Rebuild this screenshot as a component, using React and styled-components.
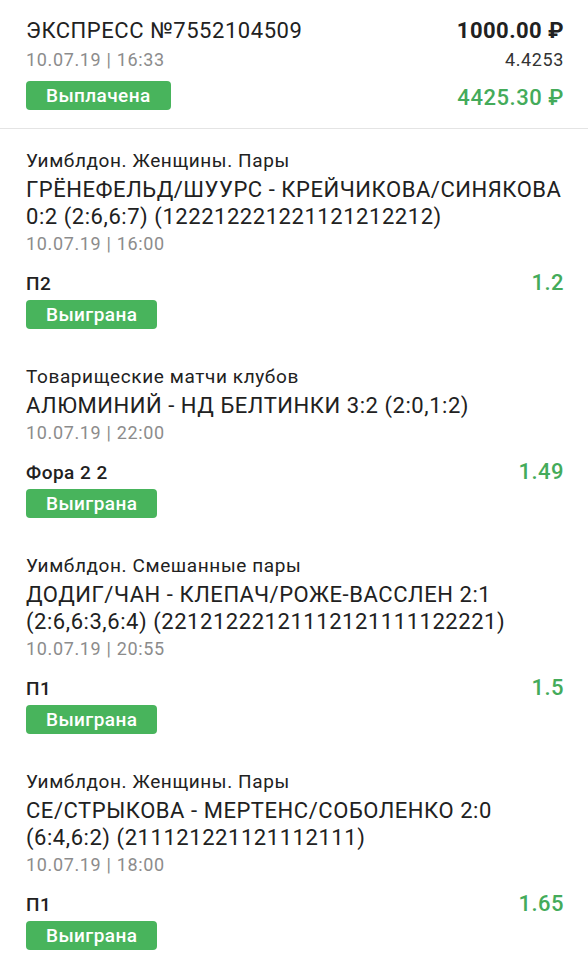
import React from "react";
import styled, { createGlobalStyle } from "styled-components";

const GlobalStyle = createGlobalStyle`
  html, body {
    margin: 0;
    padding: 0;
    background: #fff;
  }
  body {
    font-family: Roboto, "Noto Sans", Arial, sans-serif;
    color: #212121;
    -webkit-font-smoothing: antialiased;
  }
`;

const bets = [
  {
    league: "Уимблдон. Женщины. Пары",
    match: "ГРЁНЕФЕЛЬД/ШУУРС - КРЕЙЧИКОВА/СИНЯКОВА 0:2 (2:6,6:7) (122212221221121212212)",
    date: "10.07.19 | 16:00",
    pick: "П2",
    coef: "1.2",
  },
  {
    league: "Товарищеские матчи клубов",
    match: "АЛЮМИНИЙ - НД БЕЛТИНКИ 3:2 (2:0,1:2)",
    date: "10.07.19 | 22:00",
    pick: "Фора 2 2",
    coef: "1.49",
  },
  {
    league: "Уимблдон. Смешанные пары",
    match: "ДОДИГ/ЧАН - КЛЕПАЧ/РОЖЕ-ВАССЛЕН 2:1 (2:6,6:3,6:4) (22121222121112121111122221)",
    date: "10.07.19 | 20:55",
    pick: "П1",
    coef: "1.5",
  },
  {
    league: "Уимблдон. Женщины. Пары",
    match: "СЕ/СТРЫКОВА - МЕРТЕНС/СОБОЛЕНКО 2:0 (6:4,6:2) (211121221121112111)",
    date: "10.07.19 | 18:00",
    pick: "П1",
    coef: "1.65",
  },
];

const App = () => {
  return (
    <Page>
      <GlobalStyle />
      <Header>
        <Column>
          <Title>ЭКСПРЕСС №7552104509</Title>
          <DateText>10.07.19 | 16:33</DateText>
          <Badge>Выплачена</Badge>
        </Column>
        <Column align="flex-end">
          <Stake>1000.00 ₽</Stake>
          <TotalCoef>4.4253</TotalCoef>
          <Payout>4425.30 ₽</Payout>
        </Column>
      </Header>
      <List>
        {bets.map((bet, index) => (
          <Bet key={index}>
            <League>{bet.league}</League>
            <Match>{bet.match}</Match>
            <DateText>{bet.date}</DateText>
            <PickRow>
              <Pick>{bet.pick}</Pick>
              <Coef>{bet.coef}</Coef>
            </PickRow>
            <Badge>Выиграна</Badge>
          </Bet>
        ))}
      </List>
    </Page>
  );
};

const Page = styled.div`
  width: 588px;
  min-height: 964px;
  background: #fff;
  overflow: hidden;
`;

const Header = styled.div`
  display: flex;
  justify-content: space-between;
  padding: 17px 24px 16px 26px;
  border-bottom: 1px solid #e4e4e4;
`;

const Column = styled.div`
  display: flex;
  flex-direction: column;
  align-items: ${({ align }) => align || "flex-start"};
`;

const Title = styled.div`
  font-size: 22px;
  line-height: 28px;
  letter-spacing: 0.55px;
  color: #212121;
`;

const DateText = styled.div`
  font-size: 18px;
  line-height: 30px;
  letter-spacing: 0.65px;
  color: #8c8c8c;
`;

const Badge = styled.div`
  display: inline-flex;
  align-items: center;
  align-self: flex-start;
  height: 29px;
  margin-top: 6px;
  padding: 0 20px;
  border-radius: 4px;
  background: #48b45c;
  color: #fff;
  font-size: 19px;
  font-weight: 500;
  letter-spacing: 0.4px;
`;

const Stake = styled.div`
  font-size: 22px;
  line-height: 28px;
  font-weight: 700;
  letter-spacing: 0.45px;
  color: #212121;
`;

const TotalCoef = styled.div`
  font-size: 18px;
  line-height: 30px;
  letter-spacing: 0.6px;
  color: #333;
`;

const Payout = styled.div`
  margin-top: 8px;
  font-size: 22px;
  line-height: 29px;
  font-weight: 500;
  letter-spacing: 0.55px;
  color: #44ab5a;
`;

const List = styled.div`
  display: flex;
  flex-direction: column;
  gap: 36px;
  padding: 20px 24px 12px 26px;
`;

const Bet = styled.div`
  display: flex;
  flex-direction: column;

  ${Badge} {
    margin-top: 4px;
  }
  ${DateText} {
    line-height: 28px;
  }
`;

const League = styled.div`
  margin-bottom: 3px;
  font-size: 19px;
  line-height: 24px;
  letter-spacing: 0.6px;
  color: #212121;
`;

const Match = styled.div`
  margin-right: -6px;
  font-size: 22px;
  line-height: 27px;
  letter-spacing: 0.55px;
  color: #212121;
`;

const PickRow = styled.div`
  display: flex;
  justify-content: space-between;
  align-items: baseline;
  margin-top: 13px;
  line-height: 24px;
`;

const Pick = styled.div`
  font-size: 19px;
  font-weight: 500;
  letter-spacing: 0.5px;
  color: #212121;
`;

const Coef = styled.div`
  font-size: 22px;
  font-weight: 500;
  letter-spacing: 0.5px;
  color: #44ab5a;
`;

export default App;
